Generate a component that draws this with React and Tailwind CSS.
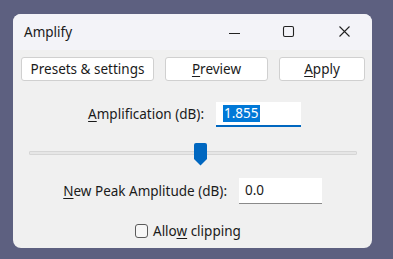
export default function App() {
  const font = { fontFamily: '"Segoe UI", "Noto Sans", "Open Sans", sans-serif' };
  return (
    <div className="w-[393px] h-[259px] bg-[#5d6080] pt-[14px] pl-[13px]" style={font}>
      <div className="w-[359px] h-[234px] rounded-[8px] bg-[#f0f0f0] overflow-hidden flex flex-col">
        {/* Title bar */}
        <div className="h-[36px] bg-[#f3f3f8] flex items-center text-[#1a1a1a]">
          <span className="ml-[11px] text-[13.5px]">Amplify</span>
          <div className="ml-auto flex items-center">
            <svg width="46" height="20" viewBox="0 0 46 20" className="mr-[8px]">
              <path d="M17 11.5h11" stroke="#222" strokeWidth="1" />
            </svg>
            <svg width="46" height="20" viewBox="0 0 46 20" className="mr-[10px]">
              <rect x="17.5" y="4.5" width="10" height="10" rx="1.5" fill="none" stroke="#222" strokeWidth="1.1" />
            </svg>
            <svg width="46" height="20" viewBox="0 0 46 20" className="mr-[4px]">
              <path d="M17.5 4.5l10 10M27.5 4.5l-10 10" stroke="#222" strokeWidth="1.1" />
            </svg>
          </div>
        </div>

        {/* Buttons */}
        <div className="flex items-center mt-[7px] ml-[8px] gap-[11px] text-[13.5px] text-[#1a1a1a]">
          <button className="w-[133px] h-[24px] pt-[1px] bg-white border border-[#d0d0d0] rounded-[3px] leading-none">
            Presets &amp; settings
          </button>
          <button className="w-[103px] h-[24px] pt-[1px] bg-white border border-[#d0d0d0] rounded-[3px] leading-none">
            <span className="underline underline-offset-2">P</span>review
          </button>
          <button className="w-[86px] h-[24px] pt-[1px] bg-white border border-[#d0d0d0] rounded-[3px] leading-none">
            <span className="underline underline-offset-2">A</span>pply
          </button>
        </div>

        {/* Amplification */}
        <div className="flex items-center mt-[21px] text-[13.5px] text-[#1a1a1a]">
          <span className="ml-[71px] w-[132px] text-right pr-[12px]">
            <span className="underline underline-offset-2">A</span>mplification (dB):
          </span>
          <div className="w-[85px] h-[25px] bg-white border-b-2 border-[#0067c0] flex items-center pl-[7px]">
            <span className="bg-[#0078d7] text-white leading-[17px] px-[1px]">1.855</span>
          </div>
        </div>

        {/* Slider */}
        <div className="relative mt-[16px] ml-[16px] w-[328px] h-[23px]">
          <div className="absolute left-0 right-0 top-[8px] h-[4px] bg-[#e6e6e6] border border-[#d6d6d6] rounded-[1px]" />
          <svg className="absolute left-[165px] top-0" width="13" height="23" viewBox="0 0 13 23">
            <path d="M2 0h9a2 2 0 0 1 2 2v14l-6.5 6.5L0 16V2a2 2 0 0 1 2-2z" fill="#0067c0" />
          </svg>
        </div>

        {/* New Peak Amplitude */}
        <div className="flex items-center mt-[12px] text-[13.5px] text-[#1a1a1a]">
          <span className="ml-[48px] w-[178px] text-right pr-[12px]">
            <span className="underline underline-offset-2">N</span>ew Peak Amplitude (dB):
          </span>
          <div className="w-[83px] h-[26px] bg-white border-b border-[#8a8a8a] flex items-center pl-[6px]">
            0.0
          </div>
        </div>

        {/* Checkbox */}
        <div className="flex items-center mt-[17px] ml-[122px] text-[13.5px] text-[#1a1a1a]">
          <div className="w-[13px] h-[14px] border border-[#5a5a5a] rounded-[3px] bg-[#f6f6f6]" />
          <span className="ml-[5px]">
            Allo<span className="underline underline-offset-2">w</span> clipping
          </span>
        </div>
      </div>
    </div>
  );
}
